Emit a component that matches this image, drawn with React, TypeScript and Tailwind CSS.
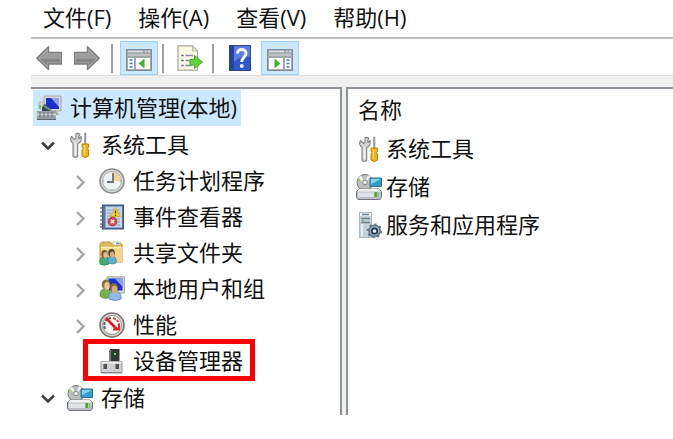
import type { ReactNode } from "react";
import { useState } from "react";

const MENUS = ["文件(F)", "操作(A)", "查看(V)", "帮助(H)"];

function Icon({ children }: { children: ReactNode }) {
  return (
    <svg viewBox="0 0 26 26" className="h-[26px] w-[26px] shrink-0" aria-hidden="true">
      {children}
    </svg>
  );
}

function ArrowIcon({ flip = false }: { flip?: boolean }) {
  return (
    <Icon>
      <g transform={flip ? "translate(26 0) scale(-1 1)" : undefined} strokeLinejoin="round">
        <path d="M.800 13.200 12.500 1.800V7.500H25.500V19H12.500V24.600Z" fill="#a8a8a8" stroke="#7c7c7c" strokeWidth="1.400" />
        <path d="M3.500 13 11 6V9.500H24V13Z" fill="#9c9c9c" />
        <path d="M3.500 13.500H24V17.500H11V20.500Z" fill="#868686" />
      </g>
    </Icon>
  );
}

function PaneIcon({ flip = false }: { flip?: boolean }) {
  return (
    <Icon>
      <rect x="0.500" y="2.500" width="25" height="21" fill="#a2a8b0" stroke="#858b94" />
      <path d="M2 4.500H17M19 4.500H20.500M22 4.500H24" stroke="#dfe3e8" strokeWidth="1.400" />
      <path d="M2 8H24" stroke="#c8cdd3" strokeWidth="1.500" />
      <g transform={flip ? "translate(26 0) scale(-1 1)" : undefined}>
        <rect x="2" y="11" width="6" height="11" fill="#f8fbff" />
        <rect x="10" y="11" width="14" height="11" fill="#fff" />
        <path d="M3.500 13H6.500M3.500 16.500H6.500M3.500 20H6.500" stroke="#3f7fc4" strokeWidth="1.600" />
        <path d="M18.500 11.500V21.500L12.500 16.500Z" fill="#3fb52c" />
      </g>
    </Icon>
  );
}

function ExportIcon() {
  return (
    <Icon>
      <path d="M1 .800H15.500L20.500 6V25.200H1Z" fill="#fbf8e6" stroke="#aaa99f" strokeWidth="1.200" />
      <path d="M15.500.800V6H20.500Z" fill="#e3e1d6" stroke="#b9b8b0" />
      <path d="M4.500 10.500H6.500M4.500 15.500H6.500M4.500 20.500H6.500" stroke="#4d4a66" strokeWidth="1.600" />
      <path d="M8.500 10.500H16M8.500 15.500H15M8.500 20.500H15" stroke="#8d86a8" strokeWidth="1.400" />
      <path d="M13 14.500H17.500V10.500L25.500 17 17.500 23.500V20H13Z" fill="#63d43a" stroke="#47ad28" strokeLinejoin="round" />
    </Icon>
  );
}

function HelpIcon() {
  return (
    <Icon>
      <rect x="2.500" y="0.500" width="21" height="25" fill="#3159c4" stroke="#2b458d" />
      <path d="M3 1H7V25H3Z" fill="#2446a0" />
      <path d="M7 1H23V12C17 10 11 13 7 17Z" fill="#5a80dc" />
      <path d="M10.500 8.500C10.500 3 19 3 19 8.500 19 12.500 14.800 12 14.800 17" fill="none" stroke="#eef1fb" strokeWidth="3" />
      <circle cx="14.800" cy="21" r="2" fill="#eef1fb" />
    </Icon>
  );
}

function ComputerIcon() {
  return (
    <Icon>
      <path d="M8 1H25V16H8Z" fill="#d6d6d2" stroke="#a9a9a5" />
      <path d="M10 3H23V14H10Z" fill="#1c2fc9" />
      <path d="M15 3H23V12Z" fill="#8da2f2" />
      <path d="M14 16.500H21L23 20H14Z" fill="#a9aaa8" />
      <path d="M3 7H7V14H3Z" fill="#d2d5d2" stroke="#aaa" strokeWidth=".800" />
      <path d="M3 10H5V13H3Z" fill="#42db35" />
      <path d="M6 16V12L9 9 15 15V17Z" fill="#384552" />
      <path d="M8 11 16 16" stroke="#87939d" strokeWidth="1.500" />
      <path d="M1 16H20V25H1Z" fill="#98a1a7" />
      <path d="M1 19.500H20" stroke="#d3d9dc" strokeWidth="1.500" />
      <path d="M4 17V23M8 17V23M12 17V23M16 17V23" stroke="#737d84" strokeWidth="1.200" />
      <path d="M1 24.500H20" stroke="#5d6569" />
    </Icon>
  );
}

function ToolsIcon() {
  return (
    <Icon>
      <g transform="translate(2 0)">
        <path
          d="M7 1.500V6L5.500 7.500 2.500 4.500C1 7 1.800 10 4 11.200V24.500Q6.300 26 8.700 24.500V11.500C11.500 10.500 12.800 8 12 4.500L10 6.500 9.500 5 11 2.500Q9.500 1 7 1.500Z"
          fill="#d4d4d4"
          stroke="#858585"
          strokeWidth="1.100"
          strokeLinejoin="round"
        />
        <path d="M6.500 11V23" stroke="#f5f5f5" strokeWidth="1.500" />
        <path d="M15.500 1H17V12H15.500Z" fill="#a7a7a7" stroke="#838383" strokeWidth=".500" />
        <path d="M13 12H19.500V15L18.500 16.500 19.500 18V24Q16.200 27 13 24V18L14 16.500 13 15Z" fill="#f0b112" stroke="#c58407" />
        <path d="M15.500 13V23" stroke="#ffe06a" strokeWidth="1.500" />
      </g>
    </Icon>
  );
}

function ClockIcon() {
  return (
    <Icon>
      <circle cx="13" cy="13" r="12" fill="#d6d7d6" stroke="#8c8e8d" strokeWidth="1.600" />
      <circle cx="13" cy="13" r="9.500" fill="#f0f3f3" stroke="#aab0b1" />
      <path d="M13 13V4A9 9 0 0 1 22 13Z" fill="#f2d291" />
      <path d="M14 5V14H8" fill="none" stroke="#647681" strokeWidth="1.800" />
      <path d="M13 21V22M4 13H5M21 13H22" stroke="#87979f" />
    </Icon>
  );
}

function EventIcon() {
  return (
    <Icon>
      <rect x="3.500" y="1" width="21" height="24" fill="#5874a2" stroke="#3d5279" />
      <rect x="6.500" y="2.500" width="16.500" height="21" fill="#c5d7ec" />
      <path d="M8 6H21M8 9H21M8 12H21M8 15H21M8 18H21M8 21H21" stroke="#86a3c6" />
      <path d="M1 4H5M1 8H5M1 12H5M1 16H5M1 20H5M1 23H5" stroke="#697080" strokeWidth="1.500" />
      <path d="M16.500 3.500 21.500 12.500H11.500Z" fill="#f7d52d" stroke="#d3b021" strokeLinejoin="round" />
      <path d="M16.500 6.500V9.500M16.500 10.500V12" stroke="#444" strokeWidth="1.400" />
      <circle cx="13.500" cy="17.500" r="4.300" fill="#d8474d" stroke="#ae3338" />
      <path d="M11.800 15.800 15.200 19.200M15.200 15.800 11.800 19.200" stroke="#fff" strokeWidth="1.300" />
    </Icon>
  );
}

function People() {
  return (
    <>
      <path d="M1 24C0 19 3 16 6 16S11 19 10 24Q5 26.500 1 24Z" fill="#42ad72" stroke="#28844f" strokeWidth=".700" />
      <path d="M9 23C8 19 10 16 13 16S18 19 17 23Q13 25 9 23Z" fill="#5dadcf" stroke="#397f9e" strokeWidth=".700" />
      <ellipse cx="5.500" cy="14" rx="3.200" ry="4" fill="#785634" />
      <ellipse cx="6.500" cy="15" rx="2.200" ry="3" fill="#e5bb8d" />
      <ellipse cx="12.500" cy="13" rx="3.300" ry="4" fill="#49443a" />
      <ellipse cx="13.200" cy="14.500" rx="2.200" ry="3" fill="#dbae82" />
    </>
  );
}

function SharedIcon() {
  return (
    <Icon>
      <path d="M1 4 3 2H11L13 4H23V22H1Z" fill="#dfb75c" stroke="#bd963f" />
      <path d="M14 2H21.500V5H14Z" fill="#fff" stroke="#c9b27a" strokeWidth=".800" />
      <path d="M17 3.500H20.500" stroke="#419bd2" strokeWidth="1.500" />
      <path d="M2 7H23V22H2Z" fill="#f4d586" />
      <path d="M2 7.500H22" stroke="#fff0b5" strokeWidth="1.500" />
      <People />
    </Icon>
  );
}

function UsersIcon() {
  return (
    <Icon>
      <path d="M8 .800H25.500V17H8Z" fill="#d9d9d2" stroke="#aaa99f" />
      <path d="M9.500 2.500H23.500V14.500H9.500Z" fill="#1930d0" />
      <path d="M16 2.500H23.500V11Z" fill="#8ca4fa" />
      <path d="M1 20C1 14 4 12 7 13 11 13 12 16 11 21Q5 24 1 20Z" fill="#75b251" stroke="#558a38" strokeWidth=".800" />
      <ellipse cx="7" cy="8.500" rx="4.300" ry="5" fill="#8a7436" />
      <ellipse cx="8" cy="10" rx="2.700" ry="4" fill="#e8c88e" />
      <path d="M10 23C9 18 12 15 16 16 20 15 23 18 22 23Q16 26 10 23Z" fill="#8fbbe9" stroke="#5d89be" strokeWidth=".800" />
      <ellipse cx="15" cy="12" rx="4" ry="5" fill="#8b653d" />
      <ellipse cx="15.500" cy="13.500" rx="2.800" ry="4" fill="#d8aa79" />
    </Icon>
  );
}

function GaugeIcon() {
  return (
    <Icon>
      <circle cx="13" cy="13" r="12" fill="#d5d5d1" stroke="#77736e" strokeWidth="1.600" />
      <circle cx="13" cy="13" r="9.500" fill="#fcfcfa" stroke="#98958f" />
      <path d="M6 17C3.500 10 8 6 12 6" fill="none" stroke="#52655c" strokeWidth="2" strokeDasharray="3 1" />
      <path d="M14 6Q20 8 20 13L19 17" fill="none" stroke="#d54843" strokeWidth="2" strokeDasharray="3 1" />
      <path d="M7 6 18 17.500" stroke="#e11b20" strokeWidth="2.600" />
      <path d="M14 17.500H20V12" fill="none" stroke="#e11b20" strokeWidth="1.800" />
    </Icon>
  );
}

function DeviceIcon() {
  return (
    <Icon>
      <path d="M11 1H20.500V14H11Z" fill="#343736" />
      <path d="M10 2H12V14H10Z" fill="#777a79" />
      <path d="M15 5H17V7H15Z" fill="#55e04d" />
      <path d="M2 13.500H23V25H2Z" fill="#cecfd2" stroke="#9b9ca0" />
      <path d="M2.500 14.500H22.500" stroke="#f4f4f4" strokeWidth="1.500" />
      <path d="M4.500 16H8V21H4.500ZM16.500 16H20V21H16.500Z" fill="#515258" />
      <path d="M2 24.500H23" stroke="#85878e" />
    </Icon>
  );
}

function StorageIcon() {
  return (
    <Icon>
      <circle cx="9" cy="8.500" r="8" fill="#bdbfbe" stroke="#777a78" />
      <path d="M9 8.500 2 4 5 1.500ZM9 8.500 12 1 15 3Z" fill="#f5f5f5" />
      <path d="M1.500 6 4 4V8Z" fill="#94d45c" />
      <circle cx="9" cy="8.500" r="2.300" fill="#eee" stroke="#808483" />
      <path d="M14 4H25.500V12.500H14Z" fill="#339fc9" stroke="#31718f" />
      <path d="M15 5H25L15 10Z" fill="#8ad2e8" />
      <path d="M3 15H23L25.500 17.500V23.500L24 25.500H2L.500 23.500V17.500Z" fill="#bcbec7" stroke="#74767f" />
      <path d="M3 15H23L24.500 17.500H1.500Z" fill="#f2f2f4" />
      <path d="M2 18.500H18V23H2Z" fill="#e0e2e8" />
      <path d="M18.500 18H22.500V23H18.500Z" fill="#48a831" />
      <path d="M21 18H22.500V23H21Z" fill="#8be263" />
    </Icon>
  );
}

function ServicesIcon() {
  return (
    <Icon>
      <path d="M3.500.500H15.500V25.500H3.500Z" fill="#c7d1d5" stroke="#aeb9bd" />
      <path d="M4 1H15V4H4Z" fill="#edf2f3" />
      <path d="M6 2.500H13M5 6.500H14M5 10.500H14" stroke="#6b8188" strokeWidth="1.400" />
      <path d="M5 12H7V24H5Z" fill="#e8eef0" />
      <path d="M6 8.500H8" stroke="#52bd65" strokeWidth="1.300" />
      <circle cx="18.500" cy="19" r="5.700" fill="#96afc2" stroke="#5d768a" strokeWidth="1.500" />
      <circle cx="18.500" cy="19" r="6.700" fill="none" stroke="#5d768a" strokeWidth="1.800" strokeDasharray="2.300 2.900" />
      <circle cx="18.500" cy="19" r="2.700" fill="#e5eef5" stroke="#273845" strokeWidth="1.700" />
    </Icon>
  );
}

function Chevron({ open }: { open: boolean }) {
  return (
    <svg viewBox="0 0 14 18" className="h-[18px] w-3.5 shrink-0" fill="none" aria-hidden="true">
      {open ? (
        <path d="M1 6.500 7 12.500 13 6.500" stroke="#404040" strokeWidth="2.600" />
      ) : (
        <path d="M4 4 10.500 10.500 4 17" stroke="#a6a6a6" strokeWidth="2.400" />
      )}
    </svg>
  );
}

const TOOLS = [
  { label: "任务计划程序", icon: <ClockIcon /> },
  { label: "事件查看器", icon: <EventIcon /> },
  { label: "共享文件夹", icon: <SharedIcon /> },
  { label: "本地用户和组", icon: <UsersIcon /> },
  { label: "性能", icon: <GaugeIcon /> },
  { label: "设备管理器", icon: <DeviceIcon />, marked: true },
];

const ITEMS = [
  { label: "系统工具", icon: <ToolsIcon /> },
  { label: "存储", icon: <StorageIcon /> },
  { label: "服务和应用程序", icon: <ServicesIcon /> },
];

function Separator() {
  return <span className="h-[29px] w-0.5 shrink-0 bg-[#a0a0a0]" />;
}

export default function App() {
  const [showTree, setShowTree] = useState(true);
  const [toolsOpen, setToolsOpen] = useState(true);

  return (
    <div className="min-h-screen bg-white pb-6 pl-[31px] font-['Open_Sans','Noto_Sans_CJK_SC',sans-serif] text-[22px] leading-8 text-[#111]">
      <nav className="flex h-[37px] items-center gap-[27px] pb-1 pl-3 whitespace-nowrap">
        {MENUS.map((menu) => (
          <button key={menu}>{menu}</button>
        ))}
      </nav>

      <div className="flex h-[39px] items-end border-t-2 border-b border-t-[#bfbfbf] border-b-[#dedede]">
        <div className="flex h-[34px] items-center">
          <div className="flex gap-3 pr-[11px] pl-[5px]">
            <button aria-label="后退"><ArrowIcon /></button>
            <button aria-label="前进"><ArrowIcon flip /></button>
          </div>
          <Separator />
          <button
            aria-label="显示/隐藏控制台树"
            onClick={() => setShowTree(!showTree)}
            className="mr-1 ml-[7px] flex h-[34px] w-[38px] items-center justify-center border border-[#99d1ff] bg-[#cce8ff] pt-1"
          >
            <PaneIcon />
          </button>
          <Separator />
          <button aria-label="导出列表" className="mr-[9px] ml-[13px]"><ExportIcon /></button>
          <Separator />
          <button aria-label="帮助" className="ml-[13px]"><HelpIcon /></button>
          <button
            aria-label="显示/隐藏操作窗格"
            className="ml-2 flex h-[34px] w-[38px] items-center justify-center border border-[#99d1ff] bg-[#cce8ff] pt-1"
          >
            <PaneIcon flip />
          </button>
        </div>
      </div>

      <main className="flex bg-[#f0f0f0] pt-[11px] whitespace-nowrap">
        {showTree && (
          <ul className="mr-1 w-[311px] shrink-0 border-t-2 border-r-2 border-[#8d929b] bg-white pt-px">
            <li>
              <button className="ml-0.5 flex h-9 items-center gap-2 bg-[#cce8ff] pr-1 pl-[3px]">
                <ComputerIcon />
                <span className="pb-0.5">计算机管理(本地)</span>
              </button>
              <ul className="pt-px">
                <li>
                  <button
                    aria-expanded={toolsOpen}
                    onClick={() => setToolsOpen(!toolsOpen)}
                    className="flex h-9 items-center pl-2.5"
                  >
                    <Chevron open={toolsOpen} />
                    <span className="ml-3 flex items-center gap-2">
                      <ToolsIcon />
                      <span className="pb-0.5">系统工具</span>
                    </span>
                  </button>
                  {toolsOpen && (
                    <ul className="pb-px">
                      {TOOLS.map((tool) => (
                        <li key={tool.label}>
                          <button className="flex h-9 items-center pl-[42px]">
                            {tool.marked ? <span className="w-3.5" /> : <Chevron open={false} />}
                            <span className="relative ml-3 flex h-9 items-center gap-2">
                              {tool.icon}
                              <span className="pb-0.5">{tool.label}</span>
                              {tool.marked && (
                                <span className="absolute -top-1 -right-3 -bottom-0.5 -left-4 border-[5px] border-[#fe0000]" />
                              )}
                            </span>
                          </button>
                        </li>
                      ))}
                    </ul>
                  )}
                </li>
                <li className="-mb-px">
                  <button className="flex h-9 items-center pl-2.5">
                    <Chevron open />
                    <span className="ml-3 flex items-center gap-2">
                      <StorageIcon />
                      <span className="pb-0.5">存储</span>
                    </span>
                  </button>
                </li>
              </ul>
            </li>
          </ul>
        )}

        <section className="min-w-0 flex-1 border-t-2 border-l-2 border-[#8d929b] bg-white">
          <table className="w-full text-left">
            <thead>
              <tr>
                <th className="h-[41px] p-0 pb-0.5 pl-2.5 font-normal">名称</th>
              </tr>
            </thead>
            <tbody>
              {ITEMS.map((item) => (
                <tr key={item.label}>
                  <td className="h-[38px] p-0 pl-2">
                    <button className="flex items-center gap-1">
                      {item.icon}
                      <span className="pb-0.5">{item.label}</span>
                    </button>
                  </td>
                </tr>
              ))}
            </tbody>
          </table>
        </section>
      </main>
    </div>
  );
}
